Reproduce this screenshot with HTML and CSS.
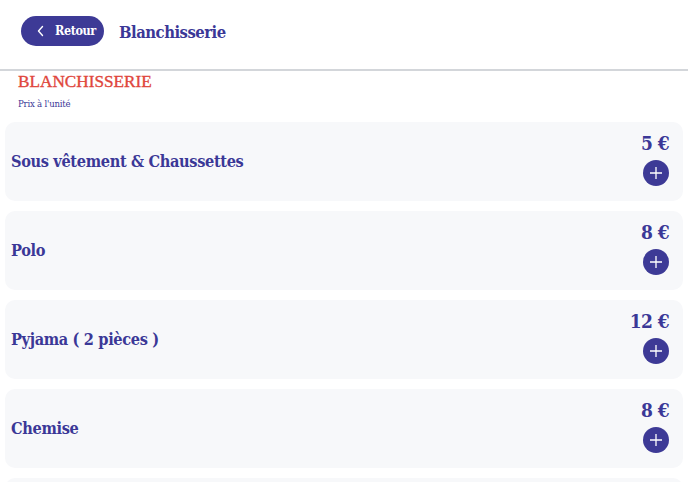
FILE: index.html
```html
<!DOCTYPE html>
<html lang="fr">
<head>
<meta charset="utf-8">
<title>Blanchisserie</title>
<link rel="stylesheet" href="styles.css">
</head>
<body>
<header class="topbar">
  <button class="back">
    <svg class="chev" width="10" height="12" viewBox="0 0 10 12"><path d="M6.5 1.5 2.5 6l4 4.5" fill="none" stroke="#fff" stroke-width="1.4" stroke-linecap="round" stroke-linejoin="round"/></svg>
    <span>Retour</span>
  </button>
  <h1 class="page-title">Blanchisserie</h1>
</header>
<section class="intro">
  <h2 class="cat">BLANCHISSERIE</h2>
  <p class="sub">Prix à l'unité</p>
</section>
<main class="list">
  <div class="card"><span class="name">Sous vêtement &amp; Chaussettes</span><div class="right"><span class="price">5 €</span><button class="add"><svg width="14" height="14" viewBox="0 0 14 14"><path d="M7 1v12M1 7h12" stroke="#fff" stroke-width="1.3"/></svg></button></div></div>
  <div class="card"><span class="name">Polo</span><div class="right"><span class="price">8 €</span><button class="add"><svg width="14" height="14" viewBox="0 0 14 14"><path d="M7 1v12M1 7h12" stroke="#fff" stroke-width="1.3"/></svg></button></div></div>
  <div class="card"><span class="name">Pyjama ( 2 pièces )</span><div class="right"><span class="price">12 €</span><button class="add"><svg width="14" height="14" viewBox="0 0 14 14"><path d="M7 1v12M1 7h12" stroke="#fff" stroke-width="1.3"/></svg></button></div></div>
  <div class="card"><span class="name">Chemise</span><div class="right"><span class="price">8 €</span><button class="add"><svg width="14" height="14" viewBox="0 0 14 14"><path d="M7 1v12M1 7h12" stroke="#fff" stroke-width="1.3"/></svg></button></div></div>
  <div class="card card-peek"></div>
</main>
</body>
</html>
```
FILE: styles.css
```css
* { box-sizing: border-box; }
body {
  margin: 0;
  background: #fff;
  font-family: "DejaVu Serif Condensed", "DejaVu Serif", serif;
  color: #3b3897;
  overflow: hidden;
}
.topbar {
  height: 71px;
  display: flex;
  align-items: center;
  gap: 15px;
  padding: 0 0 8px 21px;
  border-bottom: 2px solid #d3d6da;
}
.back {
  display: flex;
  align-items: center;
  gap: 9px;
  height: 30px;
  width: 83px;
  padding: 0 0 0 15px;
  border: none;
  border-radius: 15px;
  background: #3d3a96;
  color: #fff;
  font-family: inherit;
  font-weight: bold;
  font-size: 12.5px;
  letter-spacing: -0.4px;
}
.page-title {
  margin: 3px 0 0;
  font-size: 16.5px;
  letter-spacing: -0.5px;
  font-weight: bold;
  color: #3b3897;
}
.intro { padding: 0 18px; }
.cat {
  margin: 0;
  padding-top: 1px;
  font-family: "Liberation Serif", serif;
  font-weight: normal;
  font-size: 17.2px;
  color: #e0463c;
  line-height: 20px;
  -webkit-text-stroke: 0.35px #e0463c;
}
.sub {
  margin: 6px 0 0;
  font-size: 9.5px;
  letter-spacing: -0.2px;
  line-height: 12px;
}
.list {
  padding: 12px 5px 0;
  display: flex;
  flex-direction: column;
  gap: 10px;
}
.card {
  height: 79px;
  flex-shrink: 0;
  background: #f7f8fa;
  border-radius: 10px;
  display: flex;
  align-items: center;
  justify-content: space-between;
  padding: 0 14px 0 6px;
}
.name {
  font-size: 16.2px;
  letter-spacing: -0.35px;
  font-weight: bold;
}
.right {
  display: flex;
  flex-direction: column;
  align-items: flex-end;
  gap: 4px;
  margin-top: -6px;
}
.price {
  font-size: 19px;
  letter-spacing: -0.6px;
  font-weight: bold;
  line-height: 25px;
}
.add {
  width: 26px;
  height: 26px;
  border-radius: 50%;
  border: none;
  padding: 0;
  background: #3d3a96;
  display: flex;
  align-items: center;
  justify-content: center;
}
```
